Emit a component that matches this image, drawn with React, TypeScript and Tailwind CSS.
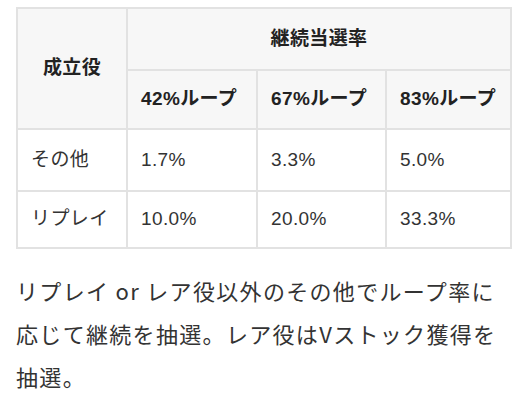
const cell = 'border-2 border-[#e2e2e2] px-[13px]'

const rows = [
  { name: 'その他', values: ['1.7%', '3.3%', '5.0%'] },
  { name: 'リプレイ', values: ['10.0%', '20.0%', '33.3%'] },
]

export default function App() {
  return (
    <div className="h-[410px] w-[512px] overflow-hidden bg-white pt-[7px] pl-[16px] font-['Liberation_Sans','Noto_Sans_CJK_JP',sans-serif] text-[#222]">
      <table className="w-[496px] table-fixed border-collapse text-[19px] tracking-[0.02em]">
        <colgroup>
          <col className="w-[110px]" />
          <col className="w-[130px]" />
          <col className="w-[129px]" />
          <col />
        </colgroup>
        <thead className="bg-[#f7f7f7] font-bold">
          <tr className="h-[62px]">
            <th rowSpan={2} className={`${cell} text-center`}>
              成立役
            </th>
            <th colSpan={3} className={`${cell} text-center`}>
              継続当選率
            </th>
          </tr>
          <tr className="h-[59px]">
            <th className={`${cell} text-left`}>42%ループ</th>
            <th className={`${cell} text-left`}>67%ループ</th>
            <th className={`${cell} text-left`}>83%ループ</th>
          </tr>
        </thead>
        <tbody className="font-normal text-[#333]">
          {rows.map((row, i) => (
            <tr key={row.name} className={i === 0 ? 'h-[62px]' : 'h-[57px]'}>
              <td className={cell}>{row.name}</td>
              {row.values.map((v) => (
                <td key={v} className={cell}>
                  {v}
                </td>
              ))}
            </tr>
          ))}
        </tbody>
      </table>
      <p className="mt-[20px] w-[495px] font-['Noto_Sans_CJK_JP',sans-serif] text-[22px] leading-[43px] tracking-[0.06em] text-[#333]">
        リプレイ or レア役以外のその他でループ率に応じて継続を抽選。レア役はVストック獲得を抽選。
      </p>
    </div>
  )
}
